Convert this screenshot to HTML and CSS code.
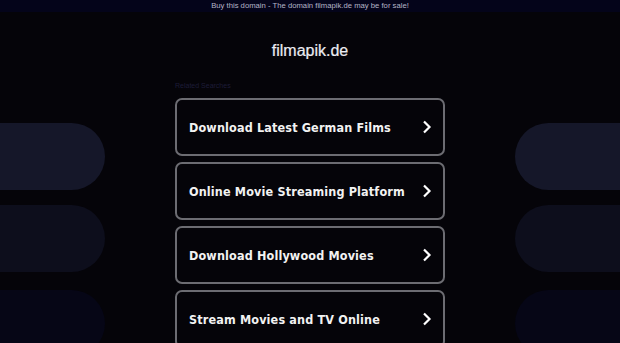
FILE: index.html
```html
<!DOCTYPE html>
<html>
<head>
<meta charset="utf-8">
<link rel="stylesheet" href="styles.css">
</head>
<body>
<div class="topbar">Buy this domain - The domain filmapik.de may be for sale!</div>
<div class="deco deco-left">
  <div class="pill p1"></div>
  <div class="pill p2"></div>
  <div class="pill p3"></div>
</div>
<div class="deco deco-right">
  <div class="pill p1"></div>
  <div class="pill p2"></div>
  <div class="pill p3"></div>
</div>
<main class="main">
  <h1 class="title">filmapik.de</h1>
  <div class="label">Related Searches</div>
  <div class="list">
    <a class="card" href="#"><span>Download Latest German Films</span><svg class="chev" viewBox="0 0 10 14" width="10" height="14"><path d="M2 1.5 L7.5 7 L2 12.5" fill="none" stroke="#fff" stroke-width="2.2"/></svg></a>
    <a class="card" href="#"><span>Online Movie Streaming Platform</span><svg class="chev" viewBox="0 0 10 14" width="10" height="14"><path d="M2 1.5 L7.5 7 L2 12.5" fill="none" stroke="#fff" stroke-width="2.2"/></svg></a>
    <a class="card" href="#"><span>Download Hollywood Movies</span><svg class="chev" viewBox="0 0 10 14" width="10" height="14"><path d="M2 1.5 L7.5 7 L2 12.5" fill="none" stroke="#fff" stroke-width="2.2"/></svg></a>
    <a class="card" href="#"><span>Stream Movies and TV Online</span><svg class="chev" viewBox="0 0 10 14" width="10" height="14"><path d="M2 1.5 L7.5 7 L2 12.5" fill="none" stroke="#fff" stroke-width="2.2"/></svg></a>
  </div>
</main>
</body>
</html>
```

FILE: styles.css
```css
html, body {
  margin: 0;
  padding: 0;
  background: #050409;
  height: 343px;
  overflow: hidden;
  font-family: "DejaVu Sans", Verdana, sans-serif;
}
.topbar {
  height: 12px;
  line-height: 12px;
  background: #04041a;
  color: #b4b4c8;
  font-family: "Liberation Sans", Arial, sans-serif;
  font-size: 7.7px;
  text-align: center;
}
.deco {
  position: absolute;
  top: 123px;
  width: 105px;
  display: flex;
  flex-direction: column;
  gap: 15px;
}
.deco-left { left: 0; }
.deco-right { left: 515px; width: 105px; }
.pill {
  height: 67px;
}
.deco-left .pill { border-radius: 0 34px 34px 0; }
.deco-right .pill { border-radius: 34px 0 0 34px; }
.p1 { background: #151729; }
.p2 { background: #0d0e1c; }
.p3 { background: #060616; margin-top: 3px; }
.main {
  position: relative;
  width: 270px;
  margin-left: 175px;
}
.title {
  margin: 0;
  padding-top: 29px;
  height: 20px;
  line-height: 20px;
  text-align: center;
  font-family: "Liberation Sans", Arial, sans-serif;
  font-weight: normal;
  font-size: 16px;
  color: #ececf2;
  -webkit-text-stroke: 0.2px #ececf2;
}
.label {
  margin-top: 20px;
  font-family: "Liberation Sans", Arial, sans-serif;
  font-size: 7px;
  line-height: 10px;
  color: #1d1c38;
}
.list {
  margin-top: 7px;
  display: flex;
  flex-direction: column;
  gap: 6px;
}
.card {
  box-sizing: border-box;
  height: 58px;
  border: 2px solid #6c6c72;
  border-radius: 7px;
  background: #050409;
  display: flex;
  align-items: center;
  justify-content: space-between;
  padding: 0 11px 0 12px;
  text-decoration: none;
  color: #f2f2f2;
  font-family: "DejaVu Sans Condensed", "DejaVu Sans", sans-serif;
  font-stretch: condensed;
  font-weight: bold;
  font-size: 12.5px;
  letter-spacing: 0.15px;
  white-space: nowrap;
}
.chev { display: block; }
```
